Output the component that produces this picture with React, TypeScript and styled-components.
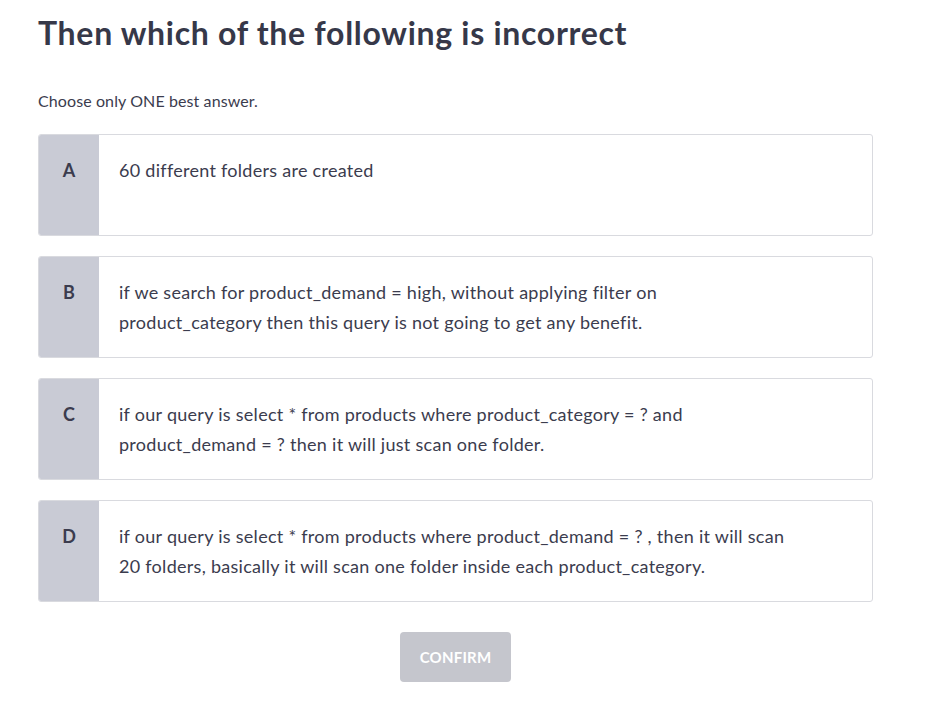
import React from "react";
import styled, { createGlobalStyle } from "styled-components";

const Global = createGlobalStyle`
  html, body { margin: 0; padding: 0; background: #ffffff; }
  body { font-family: "Lato", "Liberation Sans", sans-serif; color: #3b3c4e; }
`;

const Page = styled.main`
  padding: 11px 52px 24px 38px;
  width: 835px;
`;

const Title = styled.h1`
  margin: 0;
  font-size: 32px;
  line-height: 44px;
  font-weight: 700;
  letter-spacing: 0.7px;
  color: #363849;
`;

const Hint = styled.p`
  margin: 36px 0 0;
  font-size: 16px;
  line-height: 20px;
  letter-spacing: 0.1px;
  color: #3b3c4e;
`;

const Options = styled.div`
  margin-top: 23px;
  display: flex;
  flex-direction: column;
  gap: 20px;
`;

const Card = styled.div`
  display: flex;
  min-height: 100px;
  border: 1px solid #d9dadf;
  border-radius: 3px;
  overflow: hidden;
  background: #fff;
`;

const Letter = styled.div`
  width: 60px;
  flex: none;
  background: #c9cbd5;
  display: flex;
  justify-content: center;
  padding-top: 20px;
  font-size: 18px;
  line-height: 30px;
  font-weight: 700;
  color: #3b3c4e;
`;

const Body = styled.div`
  padding: 20px 20px 19px 20px;
  font-size: 18px;
  line-height: 30px;
  letter-spacing: 0.28px;
  color: #3b3c4e;
  max-width: 680px;
`;

const Footer = styled.div`
  display: flex;
  justify-content: center;
  margin-top: 30px;
`;

const Confirm = styled.button`
  width: 111px;
  height: 50px;
  border: none;
  border-radius: 4px;
  background: #c5c6cd;
  color: #ffffff;
  font-family: inherit;
  font-size: 15px;
  font-weight: 700;
  letter-spacing: 0.2px;
  cursor: not-allowed;
`;

const options = [
  { key: "A", text: "60 different folders are created" },
  {
    key: "B",
    text: "if we search for product_demand = high, without applying filter on product_category then this query is not going to get any benefit.",
  },
  {
    key: "C",
    text: "if our query is select * from products where product_category = ? and product_demand = ? then it will just scan one folder.",
  },
  {
    key: "D",
    text: "if our query is select * from products where product_demand = ? , then it will scan 20 folders, basically it will scan one folder inside each product_category.",
  },
];

export default function App() {
  return (
    <>
      <Global />
      <Page>
        <Title>Then which of the following is incorrect</Title>
        <Hint>Choose only ONE best answer.</Hint>
        <Options>
          {options.map((o) => (
            <Card key={o.key}>
              <Letter>{o.key}</Letter>
              <Body>{o.text}</Body>
            </Card>
          ))}
        </Options>
        <Footer>
          <Confirm disabled>CONFIRM</Confirm>
        </Footer>
      </Page>
    </>
  );
}
